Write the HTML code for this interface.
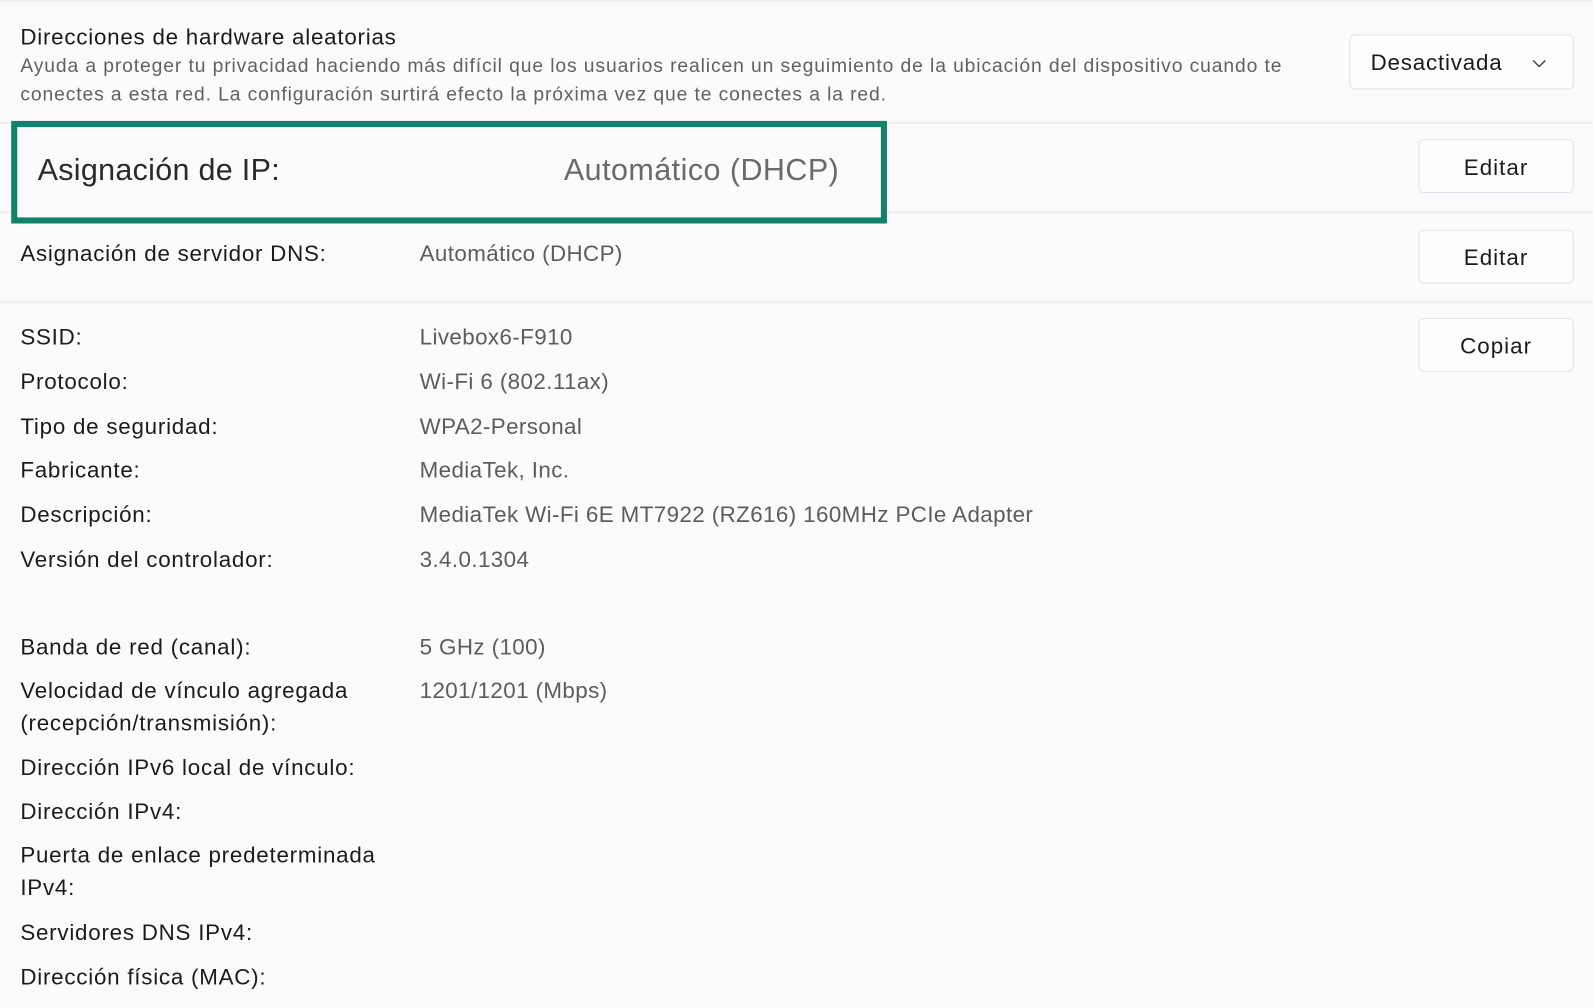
<!DOCTYPE html>
<html><head><meta charset="utf-8"><style>
body{margin:0;width:1593px;height:1008px;background:#fbfbfd;font-family:"Liberation Sans",sans-serif;color:#1b1b1b;position:relative;overflow:hidden}
#w{position:absolute;left:0;top:0;width:1568px;height:992px;transform:scale(1.016);transform-origin:0 0}
.t{position:absolute;white-space:nowrap;font-size:22px;letter-spacing:0.75px}
.v{color:#5c5c5c;letter-spacing:0.4px}
.sep{position:absolute;left:0;width:1568px;height:2px;background:#efeff2}
.btn{position:absolute;left:1396px;width:153px;height:53px;border:1px solid #e2e2e6;border-radius:5px;background:#fdfdfe;box-sizing:border-box;font-size:22px;text-align:center;line-height:53px;letter-spacing:1px}
</style></head><body><div id="w">
<div class="sep" style="top:0"></div>
<div class="t" style="left:20px;top:24px">Direcciones de hardware aleatorias</div>
<div class="t v" style="left:20px;top:55px;font-size:19px;letter-spacing:0.87px;color:#616161">Ayuda a proteger tu privacidad haciendo más difícil que los usuarios realicen un seguimiento de la ubicación del dispositivo cuando te</div>
<div class="t v" style="left:20px;top:83px;font-size:19px;letter-spacing:0.87px;color:#616161">conectes a esta red. La configuración surtirá efecto la próxima vez que te conectes a la red.</div>
<div class="btn" style="left:1328px;width:221px;top:34px;height:54px;line-height:54px;text-align:left;padding-left:20px;letter-spacing:0.8px">Desactivada<svg style="position:absolute;right:26px;top:23px" width="14" height="9" viewBox="0 0 14 9"><path d="M1 1.5 L7 7.5 L13 1.5" fill="none" stroke="#444" stroke-width="1.4"/></svg></div>
<div class="sep" style="top:120px"></div>
<div class="sep" style="top:208px"></div>
<div style="position:absolute;left:11px;top:119px;width:862px;height:101px;border:6px solid #12826a;box-sizing:border-box;background:#fbfbfd"></div>
<div class="t" style="left:37px;top:151px;font-size:30px;letter-spacing:0.3px;color:#2a2a2a">Asignación de IP:</div>
<div class="t v" style="left:555px;top:151px;font-size:30px;letter-spacing:0.45px;color:#6a6a6a">Automático (DHCP)</div>
<div class="btn" style="top:137px">Editar</div>
<div class="t" style="left:20px;top:237px">Asignación de servidor DNS:</div>
<div class="t v" style="left:413px;top:237px">Automático (DHCP)</div>
<div class="btn" style="top:226px">Editar</div>
<div class="sep" style="top:296px"></div>
<div class="btn" style="top:313px">Copiar</div>
<div class="t" style="left:20px;top:319px">SSID:</div><div class="t v" style="left:413px;top:319px">Livebox6-F910</div>
<div class="t" style="left:20px;top:363px">Protocolo:</div><div class="t v" style="left:413px;top:363px">Wi-Fi 6 (802.11ax)</div>
<div class="t" style="left:20px;top:407px">Tipo de seguridad:</div><div class="t v" style="left:413px;top:407px">WPA2-Personal</div>
<div class="t" style="left:20px;top:450px">Fabricante:</div><div class="t v" style="left:413px;top:450px">MediaTek, Inc.</div>
<div class="t" style="left:20px;top:494px">Descripción:</div><div class="t v" style="left:413px;top:494px">MediaTek Wi-Fi 6E MT7922 (RZ616) 160MHz PCIe Adapter</div>
<div class="t" style="left:20px;top:538px">Versión del controlador:</div><div class="t v" style="left:413px;top:538px">3.4.0.1304</div>
<div class="t" style="left:20px;top:624px">Banda de red (canal):</div><div class="t v" style="left:413px;top:624px">5 GHz (100)</div>
<div class="t" style="left:20px;top:667px">Velocidad de vínculo agregada</div><div class="t v" style="left:413px;top:667px">1201/1201 (Mbps)</div>
<div class="t" style="left:20px;top:699px">(recepción/transmisión):</div>
<div class="t" style="left:20px;top:743px">Dirección IPv6 local de vínculo:</div>
<div class="t" style="left:20px;top:786px">Dirección IPv4:</div>
<div class="t" style="left:20px;top:829px">Puerta de enlace predeterminada</div>
<div class="t" style="left:20px;top:861px">IPv4:</div>
<div class="t" style="left:20px;top:905px">Servidores DNS IPv4:</div>
<div class="t" style="left:20px;top:949px">Dirección física (MAC):</div>
</div></body></html>
